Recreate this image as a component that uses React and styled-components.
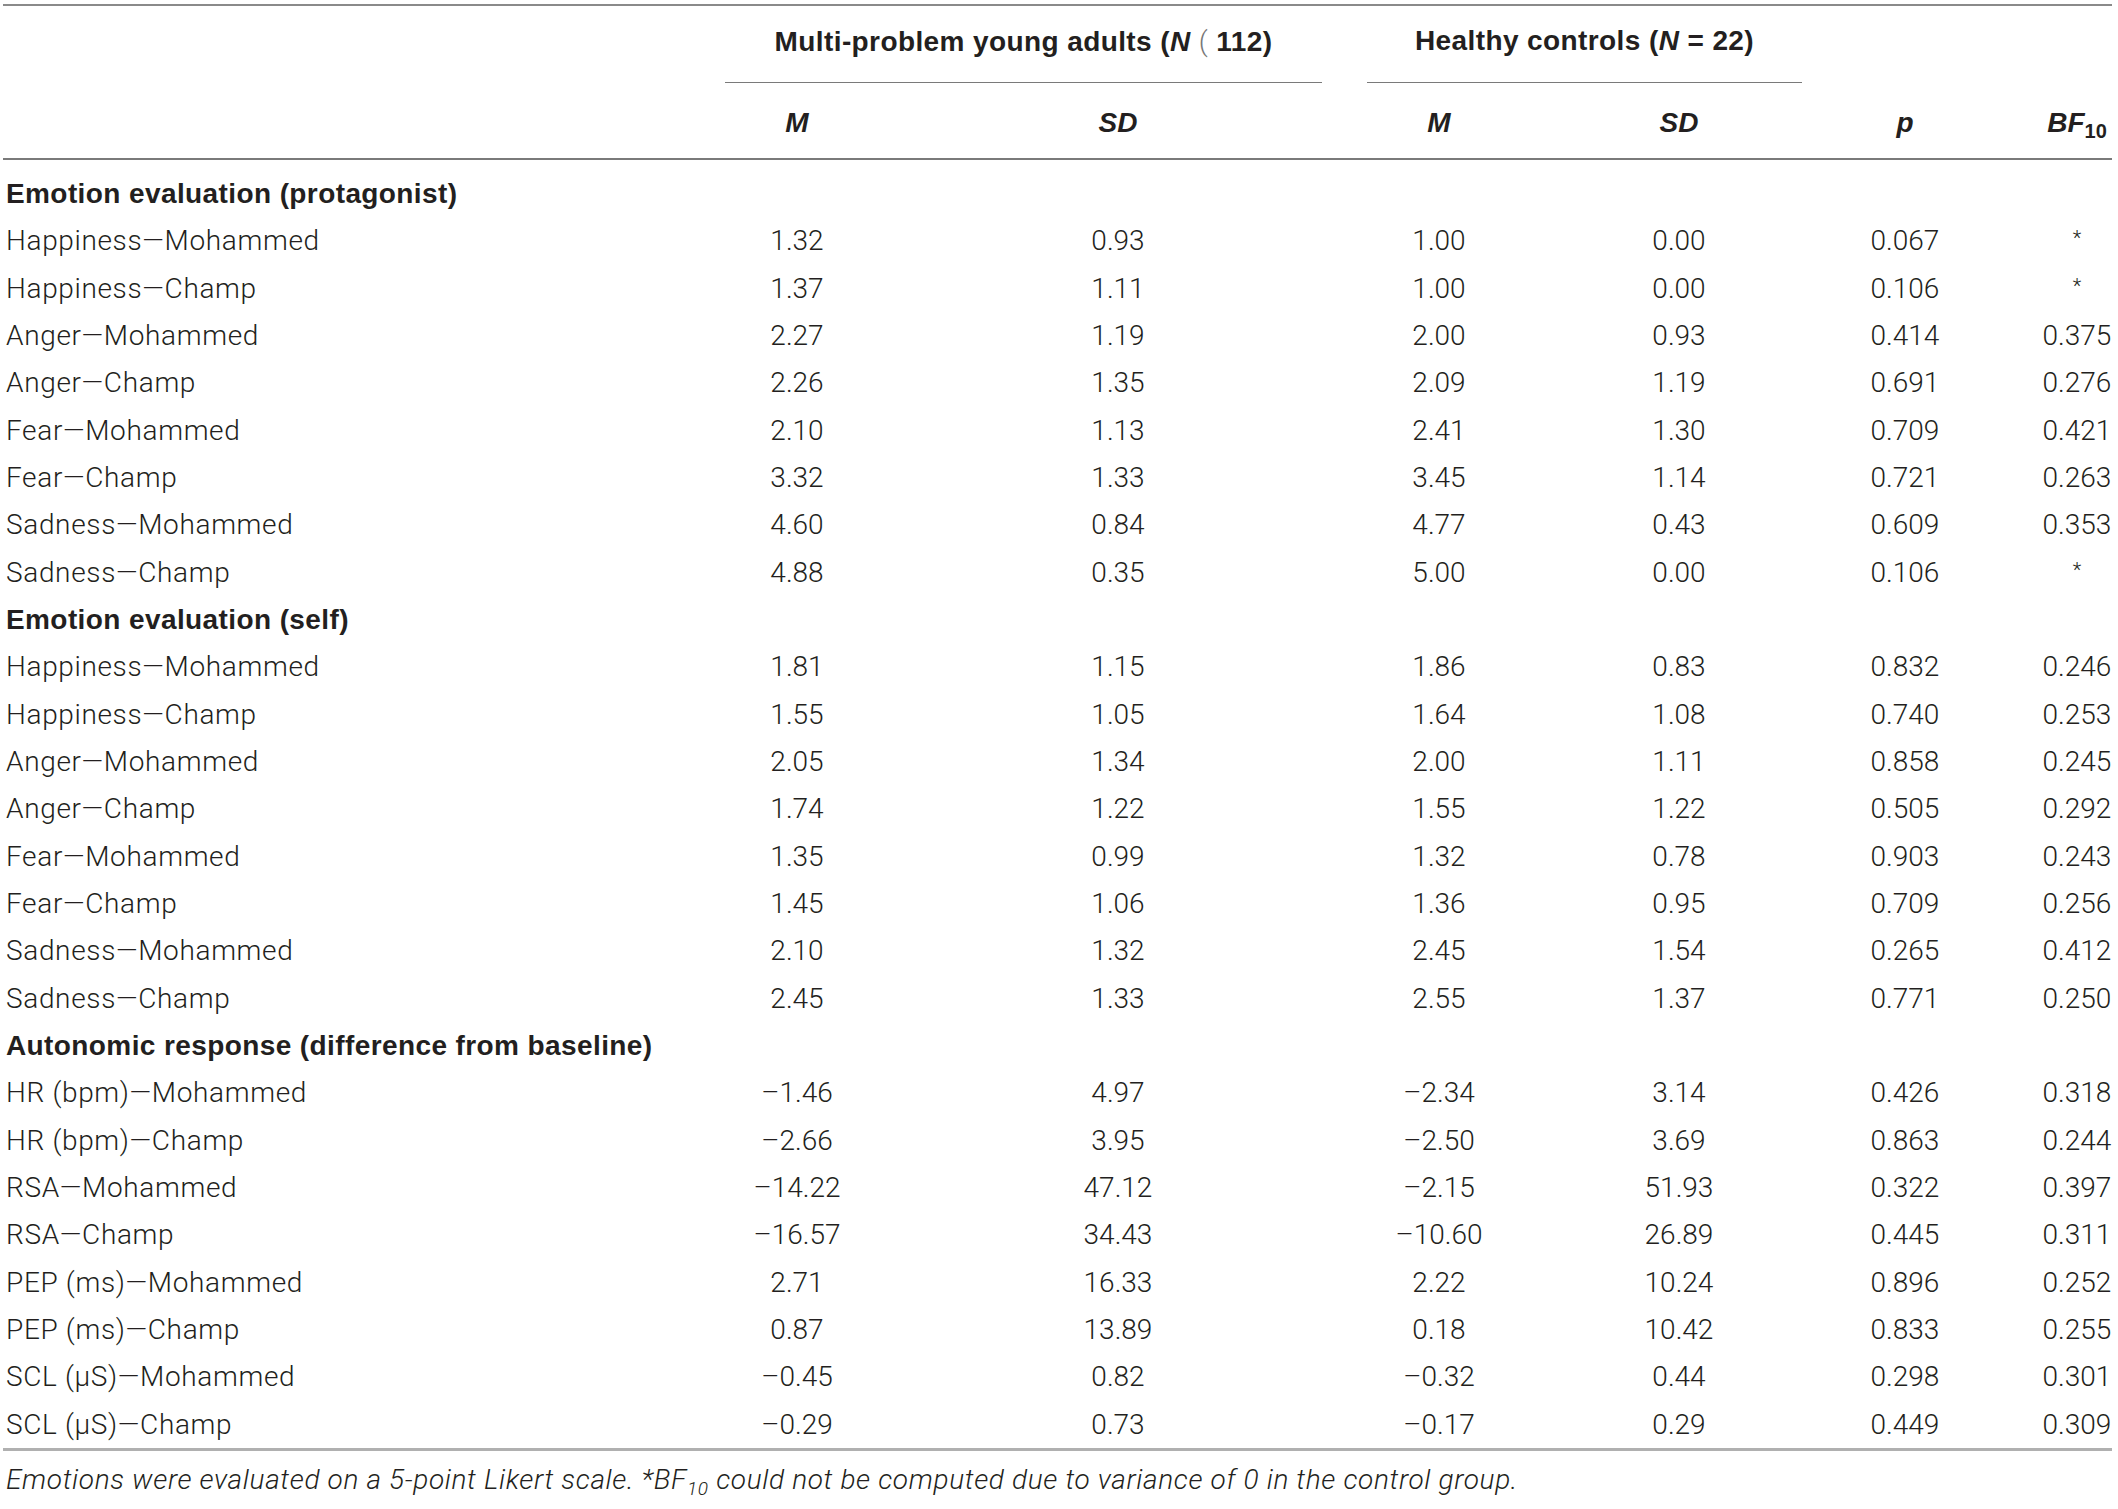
import React from 'react'
import styled, { createGlobalStyle } from 'styled-components'

const COLS = '697px 194px 448px 194px 286px 166px 124px'

const GlobalStyle = createGlobalStyle`
    html, body {
        margin: 0;
        padding: 0;
        background: #fff;
    }

    body {
        font-family: Roboto, "Liberation Sans", Arial, sans-serif;
        font-weight: 300;
        color: #231f20;
    }
`

const Page = styled.main`
    width: 2109px;
    padding: 4px 0 0 3px;
`

const Table = styled.div`
    border-top: 2px solid #8a8a8a;
    border-bottom: 3px solid #b0b0b0;
`

const Head = styled.div`
    border-bottom: 2px solid #7a7a7a;
`

const HeadRow = styled.div`
    display: grid;
    grid-template-columns: ${COLS};
    height: ${p => p.$h}px;
    align-items: center;
    font-family: "Liberation Sans", Arial, sans-serif;
    font-weight: 700;
    font-size: 28px;
`

const GroupCell = styled.div`
    grid-column: ${p => p.$col};
    align-self: stretch;
    display: flex;
    align-items: center;
    justify-content: center;
    padding-bottom: 6px;
    margin: 0 20px 0 25px;
    border-bottom: 1.5px solid #7a7a7a;
    letter-spacing: 0.4px;
`

const GroupTitle = styled.span`
    white-space: pre;

    i {
        font-style: italic;
    }

    .broken {
        font-family: Roboto, sans-serif;
        font-weight: 300;
        color: #777;
    }
`

const ColHead = styled.div`
    text-align: center;
    font-style: italic;
    padding-top: 5px;
    padding-left: ${p => p.$pl || 0}px;

    sub {
        font-size: 20px;
        font-style: normal;
        vertical-align: -6px;
        line-height: 0;
    }
`

const Body = styled.div`
    padding-top: 10px;
`

const Row = styled.div`
    display: grid;
    grid-template-columns: ${COLS};
    height: 47.33px;
    align-items: center;
    font-size: 28px;
`

const Section = styled.div`
    grid-column: 1 / -1;
    font-family: "Liberation Sans", Arial, sans-serif;
    font-weight: 700;
    letter-spacing: 0.4px;
    padding-left: 3px;
`

const Label = styled.div`
    padding-left: 3px;
    white-space: nowrap;
    letter-spacing: 0.65px;
`

const Cell = styled.div`
    text-align: center;
    padding-left: ${p => p.$pl || 0}px;
`

const Star = styled.span`
    font-size: 20px;
    position: relative;
    top: -5px;
`

const Note = styled.p`
    margin: 0;
    padding: 12px 0 0 3px;
    font-size: 28px;
    font-style: italic;
    font-weight: 300;
    letter-spacing: 0.65px;
    white-space: nowrap;

    sub {
        font-size: 19px;
        vertical-align: -6px;
        line-height: 0;
    }
`

const sections = [
    {
        title: 'Emotion evaluation (protagonist)',
        rows: [
            ['Happiness—Mohammed', '1.32', '0.93', '1.00', '0.00', '0.067', '*'],
            ['Happiness—Champ', '1.37', '1.11', '1.00', '0.00', '0.106', '*'],
            ['Anger—Mohammed', '2.27', '1.19', '2.00', '0.93', '0.414', '0.375'],
            ['Anger—Champ', '2.26', '1.35', '2.09', '1.19', '0.691', '0.276'],
            ['Fear—Mohammed', '2.10', '1.13', '2.41', '1.30', '0.709', '0.421'],
            ['Fear—Champ', '3.32', '1.33', '3.45', '1.14', '0.721', '0.263'],
            ['Sadness—Mohammed', '4.60', '0.84', '4.77', '0.43', '0.609', '0.353'],
            ['Sadness—Champ', '4.88', '0.35', '5.00', '0.00', '0.106', '*'],
        ],
    },
    {
        title: 'Emotion evaluation (self)',
        rows: [
            ['Happiness—Mohammed', '1.81', '1.15', '1.86', '0.83', '0.832', '0.246'],
            ['Happiness—Champ', '1.55', '1.05', '1.64', '1.08', '0.740', '0.253'],
            ['Anger—Mohammed', '2.05', '1.34', '2.00', '1.11', '0.858', '0.245'],
            ['Anger—Champ', '1.74', '1.22', '1.55', '1.22', '0.505', '0.292'],
            ['Fear—Mohammed', '1.35', '0.99', '1.32', '0.78', '0.903', '0.243'],
            ['Fear—Champ', '1.45', '1.06', '1.36', '0.95', '0.709', '0.256'],
            ['Sadness—Mohammed', '2.10', '1.32', '2.45', '1.54', '0.265', '0.412'],
            ['Sadness—Champ', '2.45', '1.33', '2.55', '1.37', '0.771', '0.250'],
        ],
    },
    {
        title: 'Autonomic response (difference from baseline)',
        rows: [
            ['HR (bpm)—Mohammed', '–1.46', '4.97', '–2.34', '3.14', '0.426', '0.318'],
            ['HR (bpm)—Champ', '–2.66', '3.95', '–2.50', '3.69', '0.863', '0.244'],
            ['RSA—Mohammed', '–14.22', '47.12', '–2.15', '51.93', '0.322', '0.397'],
            ['RSA—Champ', '–16.57', '34.43', '–10.60', '26.89', '0.445', '0.311'],
            ['PEP (ms)—Mohammed', '2.71', '16.33', '2.22', '10.24', '0.896', '0.252'],
            ['PEP (ms)—Champ', '0.87', '13.89', '0.18', '10.42', '0.833', '0.255'],
            ['SCL (μS)—Mohammed', '–0.45', '0.82', '–0.32', '0.44', '0.298', '0.301'],
            ['SCL (μS)—Champ', '–0.29', '0.73', '–0.17', '0.29', '0.449', '0.309'],
        ],
    },
]

const App = () => {
    return (
        <Page>
            <GlobalStyle />
            <Table>
                <Head>
                    <HeadRow $h={77}>
                        <GroupCell $col="2 / 4">
                            <GroupTitle>
                                {'Multi-problem young adults ('}<i>N</i>{' '}
                                <span className="broken">(</span>{' 112)'}
                            </GroupTitle>
                        </GroupCell>
                        <GroupCell $col="4 / 6">
                            <GroupTitle>
                                {'Healthy controls ('}<i>N</i>{' = 22)'}
                            </GroupTitle>
                        </GroupCell>
                    </HeadRow>
                    <HeadRow $h={75}>
                        <div />
                        <ColHead>M</ColHead>
                        <ColHead>SD</ColHead>
                        <ColHead>M</ColHead>
                        <ColHead>SD</ColHead>
                        <ColHead>p</ColHead>
                        <ColHead $pl={54}>BF<sub>10</sub></ColHead>
                    </HeadRow>
                </Head>
                <Body>
                    {sections.map(({ title, rows }) => (
                        <React.Fragment key={title}>
                            <Row>
                                <Section>{title}</Section>
                            </Row>
                            {rows.map(([label, m1, sd1, m2, sd2, p, bf]) => (
                                <Row key={title + label}>
                                    <Label>{label}</Label>
                                    <Cell>{m1}</Cell>
                                    <Cell>{sd1}</Cell>
                                    <Cell>{m2}</Cell>
                                    <Cell>{sd2}</Cell>
                                    <Cell>{p}</Cell>
                                    <Cell $pl={54}>{bf === '*' ? <Star>*</Star> : bf}</Cell>
                                </Row>
                            ))}
                        </React.Fragment>
                    ))}
                </Body>
            </Table>
            <Note>
                Emotions were evaluated on a 5-point Likert scale. *BF<sub>10</sub> could not be computed
                due to variance of 0 in the control group.
            </Note>
        </Page>
    )
}

export default App
